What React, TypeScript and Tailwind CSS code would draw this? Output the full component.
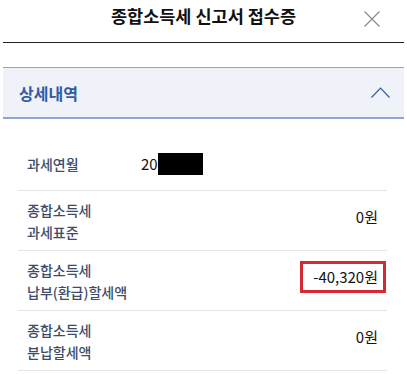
import React from "react";

const font = { fontFamily: '"Noto Sans CJK KR", "Noto Sans", sans-serif' };

const rows = [
  { label: ["종합소득세", "과세표준"], value: "0원" },
  { label: ["종합소득세", "납부(환급)할세액"], value: "-40,320원", marked: true },
  { label: ["종합소득세", "분납할세액"], value: "0원" },
];

export default function App() {
  return (
    <div className="w-[407px] h-[374px] bg-white overflow-hidden" style={font}>
      {/* Header */}
      <div className="relative mx-[3px] h-[43px] border-b border-[#222]">
        <h1 className="pt-[3px] text-center text-[17.5px] leading-[26px] font-bold text-[#111]">
          종합소득세 신고서 접수증
        </h1>
        <button className="absolute left-[361px] top-[11px] w-[16px] h-[16px]" aria-label="닫기">
          <svg width="16" height="16" viewBox="0 0 16 16">
            <path d="M0.5 0.5 L15.5 15.5 M15.5 0.5 L0.5 15.5" stroke="#8a8a8a" strokeWidth="1.2" fill="none" />
          </svg>
        </button>
      </div>

      {/* Section header */}
      <div className="mx-[3px] mt-[24px] h-[52px] flex items-center justify-between border-t border-b-2 border-[#8fa6d2] bg-[#f0f2f9] pl-[16px] pr-[14px]">
        <span className="text-[16px] font-bold text-[#2f5ca8]">상세내역</span>
        <svg width="19" height="11" viewBox="0 0 19 11">
          <polyline points="0.5,10.5 9.5,1 18.5,10.5" stroke="#2f5ca8" strokeWidth="1.2" fill="none" />
        </svg>
      </div>

      {/* Rows */}
      <div className="ml-[18px] w-[369px] mt-[19px]">
        <div className="flex items-center h-[53px] border-b border-[#e3e6eb]">
          <div className="w-[123px] pl-[9px] text-[14px] leading-[22px] font-medium text-[#3d4c69]">과세연월</div>
          <div className="flex items-center text-[15px] text-[#111]">
            20
            <span className="inline-block w-[45px] h-[22px] bg-black" />
          </div>
        </div>
        {rows.map((r) => (
          <div key={r.label[1]} className="flex items-center justify-between h-[60px] border-b border-[#e3e6eb]">
            <div className="pl-[9px] text-[14px] leading-[22px] font-medium text-[#3d4c69]">
              <div>{r.label[0]}</div>
              <div>{r.label[1]}</div>
            </div>
            {r.marked ? (
              <span className="mr-[1px] mb-[8px] inline-block h-[32px] border-[3px] border-[#d42a35] pl-[10px] pr-[5px] text-[15px] leading-[26px] text-[#111]">
                {r.value}
              </span>
            ) : (
              <span className="pr-[9px] mb-[6px] text-[15px] text-[#111]">{r.value}</span>
            )}
          </div>
        ))}
      </div>
    </div>
  );
}
